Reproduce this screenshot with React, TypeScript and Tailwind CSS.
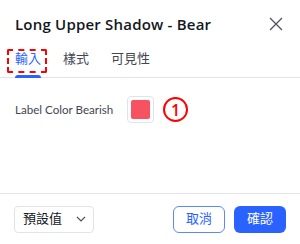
import React from "react";

export default function App() {
  const cjk = { fontFamily: '"Open Sans", "Noto Sans CJK TC", sans-serif' };
  return (
    <div className="w-[300px] h-[244px] bg-white flex flex-col text-[#131722] overflow-hidden" style={cjk}>
      <div className="flex items-center justify-between pl-[15px] pr-[17px] h-[46px] pt-[2px]">
        <div className="text-[15px] font-semibold tracking-[0.2px]">Long Upper Shadow - Bear</div>
        <svg width="14" height="14" viewBox="0 0 14 14" className="text-[#50535e]">
          <path d="M1 1L13 13M13 1L1 13" stroke="currentColor" strokeWidth="1.3" fill="none" />
        </svg>
      </div>
      <div className="flex items-end h-[32px] border-b border-[#e0e3eb] pl-[15px] gap-[22px] text-[13px]">
        <div className="relative flex flex-col items-center">
          <span className="text-[#2962ff] leading-[20px] pb-[7px]">輸入</span>
          <div className="h-[3px] w-full bg-[#2962ff] rounded-t-sm -mb-px"></div>
          <div className="absolute left-[-8px] right-[-6px] top-[1px] bottom-[4px] border-2 border-dashed border-[#ff0000] rounded-[2px]"></div>
        </div>
        <span className="text-[#434651] leading-[20px] pb-[9px]">樣式</span>
        <span className="text-[#434651] leading-[20px] pb-[9px]">可見性</span>
      </div>
      <div className="flex items-center pl-[15px] pt-[18px]">
        <span className="text-[11.6px] text-[#434651] w-[112px] shrink-0 whitespace-nowrap" style={{ fontFamily: 'Lato, sans-serif' }}>Label Color Bearish</span>
        <div className="w-[27px] h-[27px] border border-[#e0e3eb] rounded-[4px] flex items-center justify-center shrink-0">
          <div className="w-[19px] h-[19px] bg-[#f7525f] rounded-[2px]"></div>
        </div>
        <div className="ml-[9px] w-[25px] h-[25px] rounded-full border-2 border-[#ff0000] flex items-center justify-center text-[#ff0000] text-[16px] font-semibold leading-none shrink-0">1</div>
      </div>
      <div className="flex-1"></div>
      <div className="border-t border-[#e0e3eb] h-[51px] flex items-center px-[14px]">
        <div className="w-[80px] h-[27px] border border-[#e0e3eb] rounded-[4px] flex items-center justify-between pl-[8px] pr-[7px] text-[13px] text-[#131722]">
          <span>預設值</span>
          <svg width="10" height="6" viewBox="0 0 10 6" className="text-[#50535e]">
            <path d="M1 1L5 5L9 1" stroke="currentColor" strokeWidth="1.2" fill="none" />
          </svg>
        </div>
        <div className="flex-1"></div>
        <div className="w-[52px] h-[27px] border border-[#5b87ff] rounded-[6px] flex items-center justify-center text-[13px] text-[#2962ff]">取消</div>
        <div className="ml-[9px] w-[52px] h-[27px] bg-[#2962ff] rounded-[6px] flex items-center justify-center text-[13px] text-white">確認</div>
      </div>
    </div>
  );
}
